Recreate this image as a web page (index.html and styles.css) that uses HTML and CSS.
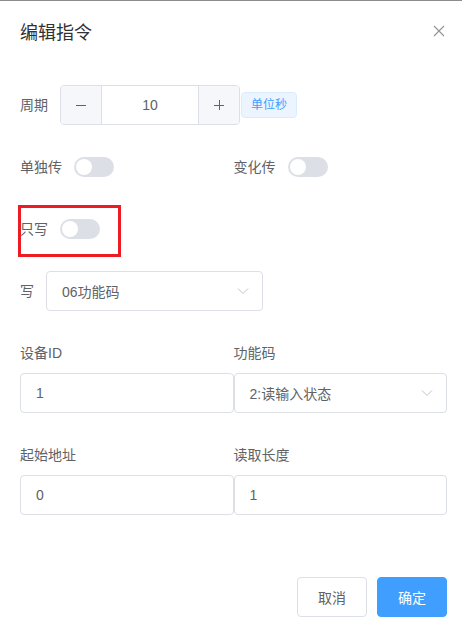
FILE: index.html
```html
<!DOCTYPE html>
<html lang="zh-CN">
<head>
<meta charset="utf-8">
<title>编辑指令</title>
<link rel="stylesheet" href="styles.css">
</head>
<body>
<div class="dialog">
  <div class="dialog-header">
    <span class="dialog-title">编辑指令</span>
    <button class="close-btn" aria-label="关闭">
      <svg width="16" height="16" viewBox="0 0 16 16"><path d="M3 3L13 13M13 3L3 13" stroke="#909399" stroke-width="1.1" fill="none"/></svg>
    </button>
  </div>
  <div class="dialog-body">
    <div class="form-item">
      <label class="label">周期</label>
      <div class="input-number">
        <span class="num-btn num-minus"><svg width="12" height="12" viewBox="0 0 12 12"><path d="M1 6.5H11" stroke="#606266" stroke-width="1"/></svg></span>
        <input class="num-input" value="10">
        <span class="num-btn num-plus"><svg width="12" height="12" viewBox="0 0 12 12"><path d="M1 6.5H11M6.5 1V11" stroke="#606266" stroke-width="1"/></svg></span>
      </div>
      <span class="tag">单位秒</span>
    </div>

    <div class="grid-2">
      <div class="form-item">
        <label class="label">单独传</label>
        <span class="switch"><span class="switch-dot"></span></span>
      </div>
      <div class="form-item">
        <label class="label">变化传</label>
        <span class="switch"><span class="switch-dot"></span></span>
      </div>
    </div>

    <div class="form-item highlighted">
      <label class="label">只写</label>
      <span class="switch"><span class="switch-dot"></span></span>
      <span class="red-box"></span>
    </div>

    <div class="form-item">
      <label class="label">写</label>
      <div class="select select-small">
        <span class="select-value">06功能码</span>
        <svg class="arrow" width="12" height="8" viewBox="0 0 12 8"><path d="M1 1.5L6 6.5L11 1.5" stroke="#c0c4cc" stroke-width="1" fill="none"/></svg>
      </div>
    </div>

    <div class="grid-2">
      <div class="stack-item">
        <label class="top-label">设备ID</label>
        <input class="input" value="1">
      </div>
      <div class="stack-item">
        <label class="top-label">功能码</label>
        <div class="select">
          <span class="select-value">2:读输入状态</span>
          <svg class="arrow" width="12" height="8" viewBox="0 0 12 8"><path d="M1 1.5L6 6.5L11 1.5" stroke="#c0c4cc" stroke-width="1" fill="none"/></svg>
        </div>
      </div>
    </div>

    <div class="grid-2">
      <div class="stack-item">
        <label class="top-label">起始地址</label>
        <input class="input" value="0">
      </div>
      <div class="stack-item">
        <label class="top-label">读取长度</label>
        <input class="input" value="1">
      </div>
    </div>
  </div>
  <div class="dialog-footer">
    <button class="btn btn-default">取消</button>
    <button class="btn btn-primary">确定</button>
  </div>
</div>
</body>
</html>
```

FILE: styles.css
```css
html, body {
  margin: 0;
  padding: 0;
  background: #ffffff;
  overflow: hidden;
}

body {
  font-family: "Liberation Sans", "Noto Sans CJK SC", sans-serif;
  font-size: 14px;
  color: #606266;
}

.dialog {
  width: 467px;
  border-top: 1px solid #8c8c8c;
  background: #fff;
}

.dialog-header {
  display: flex;
  justify-content: space-between;
  align-items: center;
  padding: 20px 20px 10px;
}

.dialog-title {
  font-size: 18px;
  line-height: 24px;
  color: #303133;
}

.close-btn {
  width: 16px;
  height: 16px;
  padding: 0;
  border: 0;
  background: transparent;
  display: flex;
  margin-top: -4px;
}

.dialog-body {
  padding: 30px 20px 30px;
}

.form-item {
  display: flex;
  align-items: center;
  height: 40px;
  margin-bottom: 22px;
}

.label {
  padding-right: 12px;
  line-height: 40px;
  color: #606266;
}

.grid-2 {
  display: grid;
  grid-template-columns: 1fr 1fr;
}

.input-number {
  display: flex;
  width: 180px;
  height: 40px;
  box-sizing: border-box;
  border: 1px solid #dcdfe6;
  border-radius: 4px;
  overflow: hidden;
}

.num-btn {
  width: 40px;
  display: flex;
  align-items: center;
  justify-content: center;
  background: #f5f7fa;
}

.num-minus {
  border-right: 1px solid #dcdfe6;
}

.num-plus {
  border-left: 1px solid #dcdfe6;
}

.num-input {
  flex: 1;
  min-width: 0;
  border: 0;
  padding: 0;
  text-align: center;
  font: inherit;
  color: #606266;
  outline: none;
}

.tag {
  margin-left: 1px;
  height: 26px;
  line-height: 24px;
  box-sizing: border-box;
  padding: 0 9px;
  font-size: 12px;
  color: #409eff;
  background: #ecf5ff;
  border: 1px solid #d9ecff;
  border-radius: 4px;
}

.switch {
  position: relative;
  display: inline-block;
  width: 40px;
  height: 20px;
  border-radius: 10px;
  background: #dcdfe6;
}

.switch-dot {
  position: absolute;
  top: 2px;
  left: 2px;
  width: 16px;
  height: 16px;
  border-radius: 50%;
  background: #fff;
}

.highlighted {
  position: relative;
}

.red-box {
  position: absolute;
  left: -2px;
  top: -4px;
  width: 103px;
  height: 52px;
  box-sizing: border-box;
  border: 3px solid #ed1c24;
  pointer-events: none;
}

.select {
  display: flex;
  align-items: center;
  justify-content: space-between;
  height: 40px;
  box-sizing: border-box;
  border: 1px solid #dcdfe6;
  border-radius: 4px;
  padding: 0 13px 0 15px;
  color: #606266;
  background: #fff;
}

.select-small {
  width: 217px;
}

.stack-item {
  display: flex;
  flex-direction: column;
  margin-bottom: 22px;
}

.top-label {
  line-height: 40px;
  height: 40px;
  color: #606266;
}

.input {
  height: 40px;
  box-sizing: border-box;
  border: 1px solid #dcdfe6;
  border-radius: 4px;
  padding: 0 15px;
  font: inherit;
  color: #606266;
  outline: none;
  width: 100%;
}

.dialog-footer {
  display: flex;
  justify-content: flex-end;
  gap: 10px;
  padding: 10px 20px 20px;
}

.btn {
  width: 70px;
  height: 40px;
  box-sizing: border-box;
  border-radius: 4px;
  font-family: inherit;
  font-size: 14px;
  padding: 0;
}

.btn-default {
  background: #fff;
  border: 1px solid #dcdfe6;
  color: #606266;
}

.btn-primary {
  background: #409eff;
  border: 1px solid #409eff;
  color: #fff;
}
```
